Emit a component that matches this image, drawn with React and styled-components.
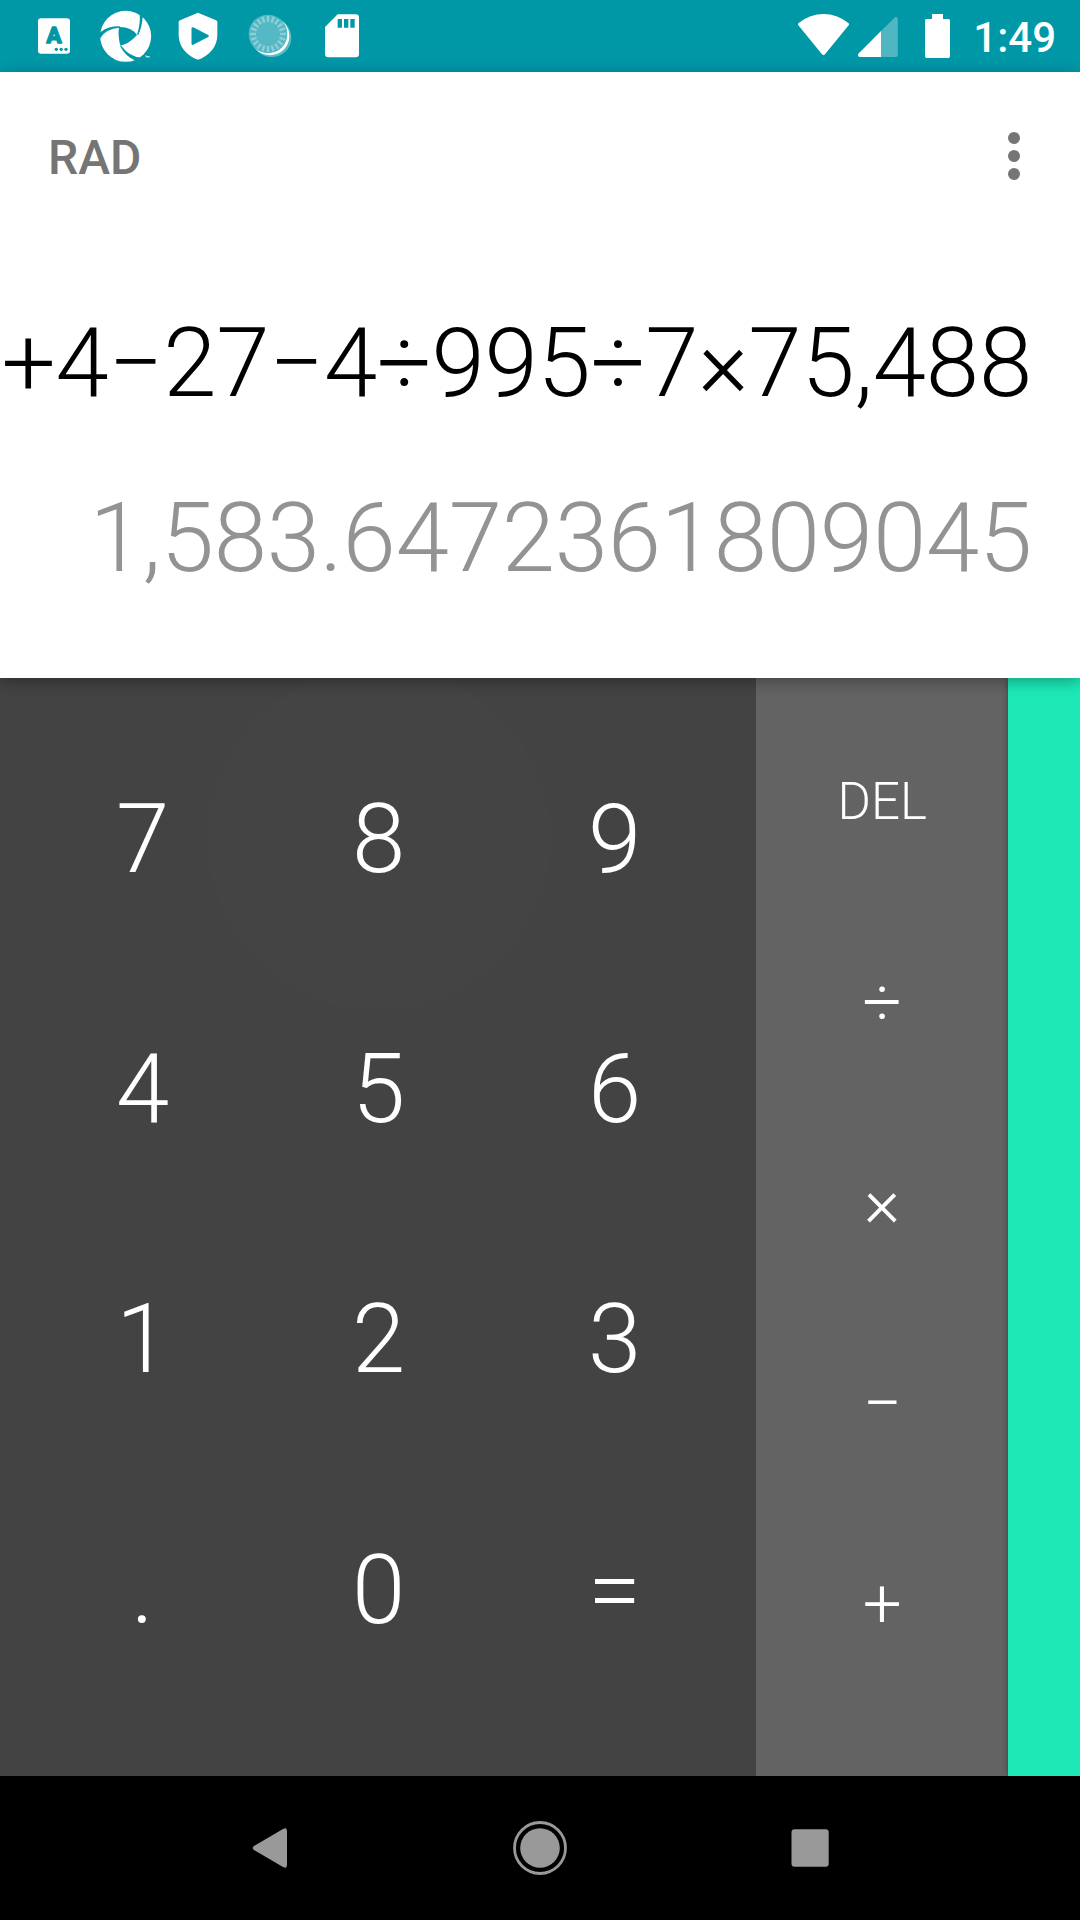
import React from "react";
import styled, { createGlobalStyle } from "styled-components";

const GlobalStyle = createGlobalStyle`
  * { box-sizing: border-box; }
  body { margin: 0; background: #000; }
`;

const TEAL = "#0097a7";

const Screen = styled.div`
  width: 1080px;
  height: 1920px;
  display: flex;
  flex-direction: column;
  overflow: hidden;
  background: #000;
  font-family: Roboto, "Liberation Sans", sans-serif;
`;

const StatusBar = styled.header`
  flex: none;
  height: 72px;
  display: flex;
  justify-content: space-between;
  padding: 0 24px 0 18px;
  background: ${TEAL};
`;

const StatusGroup = styled.div`
  display: flex;
  align-items: center;
`;

const StatusIcon = styled.svg`
  display: block;
  flex: none;
  width: ${(p) => p.$width || 72}px;
  height: 72px;
  margin-right: ${(p) => p.$after || 0}px;
`;

const Clock = styled.span`
  width: 106px;
  text-align: right;
  font-size: 42px;
  line-height: 49px;
  font-weight: 500;
  color: #fff;
  padding-top: 2px;
`;

const Display = styled.section`
  flex: none;
  height: 606px;
  position: relative;
  z-index: 2;
  display: flex;
  flex-direction: column;
  background: #fff;
  box-shadow: 0 4px 14px rgba(0, 0, 0, 0.3);
`;

const Toolbar = styled.div`
  height: 168px;
  display: flex;
  align-items: center;
  justify-content: space-between;
  padding: 4px 48px 0;
`;

const Mode = styled.span`
  font-size: 48px;
  line-height: 56px;
  font-weight: 500;
  color: #757575;
`;

const MenuButton = styled.button`
  display: flex;
  flex-direction: column;
  align-items: center;
  gap: 6px;
  width: 36px;
  margin-top: -4px;
  padding: 0;
  border: 0;
  background: none;
`;

const MenuDot = styled.i`
  width: 12px;
  height: 12px;
  border-radius: 50%;
  background: #757575;
`;

const Line = styled.div`
  display: flex;
  justify-content: flex-end;
  height: 112px;
  margin-top: ${(p) => p.$gap}px;
  padding-right: 48px;
  font-size: 96px;
  line-height: 112px;
  font-weight: 300;
  letter-spacing: ${(p) => p.$tracking}px;
  white-space: nowrap;
  color: ${(p) => p.$color};
`;

const Pads = styled.main`
  flex: none;
  height: 1098px;
  display: flex;
`;

const NumberPad = styled.div`
  width: 756px;
  display: grid;
  grid-template-columns: repeat(3, 1fr);
  grid-template-rows: repeat(4, 1fr);
  padding: 36px 23.5px 61px 24.5px;
  background: #434343;
  overflow: hidden;
`;

const OperatorPad = styled.div`
  width: 252px;
  display: grid;
  grid-template-rows: repeat(5, 1fr);
  padding: 24px 0 70.8px 0.3px;
  background: #636363;
`;

const Key = styled.button`
  position: relative;
  display: flex;
  align-items: center;
  justify-content: center;
  padding: 0;
  border: 0;
  background: none;
  font-family: inherit;
  font-weight: 300;
  font-size: ${(p) => p.$size}px;
  line-height: 1.172;
  color: #fff;
`;

const Ripple = styled.i`
  position: absolute;
  left: 50%;
  top: 50%;
  width: 344px;
  height: 344px;
  margin: -172px 0 0 -172px;
  border-radius: 50%;
  background: #444;
`;

const KeyLabel = styled.span`
  position: relative;
`;

const AdvancedPad = styled.aside`
  width: 72px;
  background: #1de9b6;
  box-shadow: 0 0 6px rgba(0, 0, 0, 0.35);
`;

const NavBar = styled.nav`
  flex: none;
  height: 144px;
  display: flex;
  align-items: center;
  justify-content: center;
  gap: 198px;
`;

const NavIcon = styled.svg`
  width: 72px;
  height: 72px;
  fill: #999;
`;

const digits = ["7", "8", "9", "4", "5", "6", "1", "2", "3", ".", "0", "="];
const operators = ["DEL", "÷", "×", "−", "+"];
const ticks = Array.from({ length: 20 }, (_, i) => i * 18);

function NotificationIcons() {
  return (
    <StatusGroup>
      <StatusIcon viewBox="54 0 216 216">
        <rect x="114" y="55" width="96" height="106" rx="9" fill="#fff" />
        <text
          x="162"
          y="130"
          textAnchor="middle"
          fontFamily="Roboto, sans-serif"
          fontWeight="700"
          fontSize="67"
          fill={TEAL}
          stroke={TEAL}
          strokeWidth="5"
          strokeLinejoin="round"
        >
          A
        </text>
        <g fill={TEAL}>
          <circle cx="169" cy="148" r="5" />
          <circle cx="183.500" cy="148" r="5" />
          <circle cx="198" cy="148" r="5" />
        </g>
      </StatusIcon>
      <StatusIcon viewBox="270 0 216 216">
        <circle cx="377" cy="109" r="76.500" fill="#fff" />
        <g fill={TEAL}>
          <path d="M357 81Q394 80 411 105Q386 133 361 137Q353 108 357 81Z" />
          <path d="M292 98L303 95Q326 78 360 79L358 83Q318 86 301 114L292 114Z" />
          <path d="M416 30L419 42Q422 70 411 104L415 104Q427 78 428 50L436 40Z" />
          <path d="M360 138Q376 168 404 181L402 192L432 180L424 173Q388 171 365 139Z" />
        </g>
        <path d="M435 168h5v4M442 173v-5l3 3 2-3v5" fill="none" stroke="#fff" strokeWidth="2" />
      </StatusIcon>
      <StatusIcon viewBox="486 0 216 216">
        <path
          d="M594 38L648 61Q652 63 652 67V106C652 140 626 170 594 179C562 170 536 140 536 106V67Q536 63 540 61Z"
          fill="#fff"
        />
        <path
          d="M578 85L623 108L578 131Z"
          fill={TEAL}
          stroke={TEAL}
          strokeWidth="7"
          strokeLinejoin="round"
        />
      </StatusIcon>
      <StatusIcon viewBox="702 0 216 216">
        <circle cx="815" cy="113" r="59" fill="#fff" opacity="0.35" />
        <circle cx="810" cy="108" r="58" fill="#fff" />
        <circle cx="804" cy="102" r="58" fill="#54b9c5" />
        <g stroke="#8fced6" strokeWidth="7">
          {ticks.map((a) => (
            <path key={a} d="M804 48V66" transform={`rotate(${a} 804 102)`} />
          ))}
        </g>
      </StatusIcon>
      <StatusIcon viewBox="918 0 216 216">
        <path
          d="M1013 43H1067Q1077 43 1077 53V162Q1077 172 1067 172H985Q975 172 975 162V81Z"
          fill="#fff"
        />
        <path d="M1013 57h13v26h-13zM1032 57h13v26h-13zM1051 57h13v26h-13z" fill={TEAL} />
      </StatusIcon>
    </StatusGroup>
  );
}

function SystemIcons() {
  return (
    <StatusGroup>
      <StatusIcon $width={51} $after={9} viewBox="114 0 153 216">
        <path
          d="M116 69Q150 42 190.500 42T265 69Q269 72 266 76L195 163Q190.500 168 186 163L115 76Q112 72 116 69Z"
          fill="#fff"
        />
      </StatusIcon>
      <StatusIcon $width={40} $after={27} viewBox="294 0 120 216">
        <path d="M363 93L405 52Q413 49 413.500 57V165Q413 171 407 171H363Z" fill="#4fb6c2" />
        <path d="M363 93V171H299Q292 170 295 161Z" fill="#fff" />
      </StatusIcon>
      <StatusIcon $width={25} viewBox="495 0 75 216">
        <path
          d="M516 42H549V57H565Q570 57 570 62V169Q570 174 565 174H500Q495 174 495 169V62Q495 57 500 57H516Z"
          fill="#fff"
        />
      </StatusIcon>
      <Clock>1:49</Clock>
    </StatusGroup>
  );
}

export default function App() {
  return (
    <Screen>
      <GlobalStyle />
      <StatusBar>
        <NotificationIcons />
        <SystemIcons />
      </StatusBar>
      <Display>
        <Toolbar>
          <Mode>RAD</Mode>
          <MenuButton aria-label="More options">
            <MenuDot />
            <MenuDot />
            <MenuDot />
          </MenuButton>
        </Toolbar>
        <Line $gap={67} $tracking={-0.17} $color="#000">+4−27−4÷995÷7×75,488</Line>
        <Line $gap={63} $tracking={-0.22} $color="#939393">1,583.6472361809045</Line>
      </Display>
      <Pads>
        <NumberPad>
          {digits.map((d) => (
            <Key key={d} $size={96}>
              {d === "8" && <Ripple />}
              <KeyLabel>{d}</KeyLabel>
            </Key>
          ))}
        </NumberPad>
        <OperatorPad>
          {operators.map((o) => (
            <Key key={o} $size={o === "DEL" ? 51 : 69}>
              <KeyLabel>{o}</KeyLabel>
            </Key>
          ))}
        </OperatorPad>
        <AdvancedPad />
      </Pads>
      <NavBar>
        <NavIcon viewBox="234 1812 72 72" aria-label="Back">
          <path d="M254 1846L283 1829Q287 1827 287 1831V1865Q287 1869 283 1867L254 1850Q251.500 1848 254 1846Z" />
        </NavIcon>
        <NavIcon viewBox="504 1812 72 72" aria-label="Home">
          <circle cx="540" cy="1848" r="25.500" fill="none" stroke="#999" strokeWidth="2.800" />
          <circle cx="540" cy="1848" r="19.800" />
        </NavIcon>
        <NavIcon viewBox="774 1812 72 72" aria-label="Recent apps">
          <rect x="791.500" y="1829.200" width="37.200" height="37.500" rx="3" />
        </NavIcon>
      </NavBar>
    </Screen>
  );
}
